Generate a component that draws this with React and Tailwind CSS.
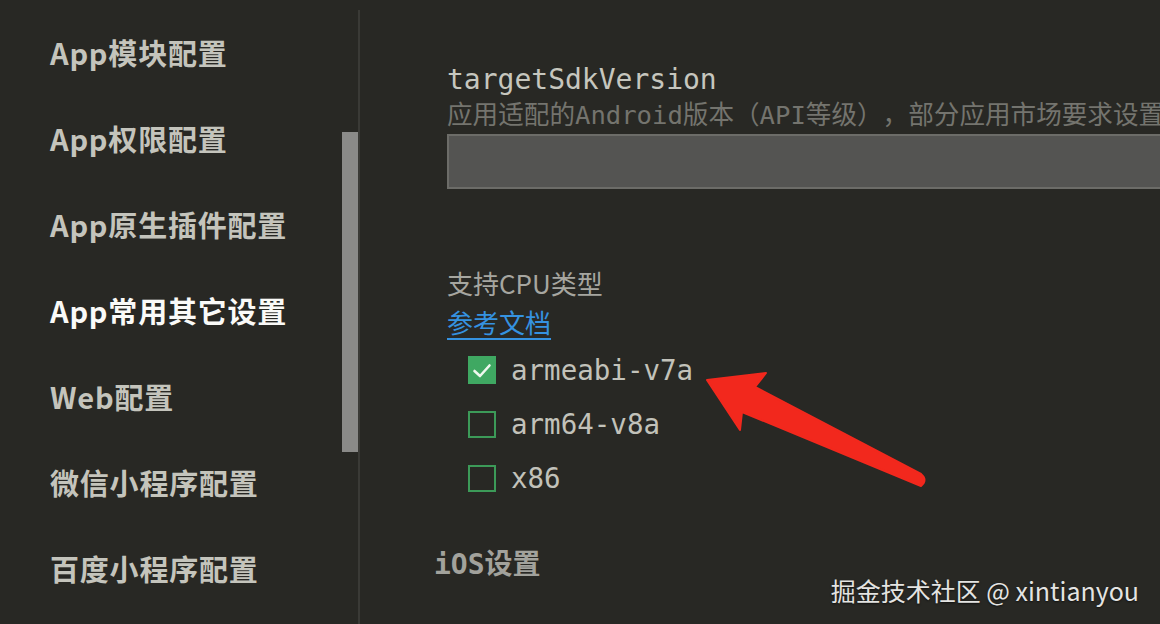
import React from "react";

const sideItems = [
  { label: "App模块配置" },
  { label: "App权限配置" },
  { label: "App原生插件配置" },
  { label: "App常用其它设置", active: true },
  { label: "Web配置" },
  { label: "微信小程序配置" },
  { label: "百度小程序配置" },
];

const cpus = [
  { label: "armeabi-v7a", checked: true },
  { label: "arm64-v8a", checked: false },
  { label: "x86", checked: false },
];

const mono = { fontFamily: '"DejaVu Sans Mono", "Noto Sans CJK SC", monospace' };
const sans = { fontFamily: '"Noto Sans CJK SC", "Noto Sans", sans-serif' };

function Checkbox({ checked }) {
  if (checked) {
    return (
      <div className="w-[28px] h-[28px] bg-[#3fa862] flex items-center justify-center">
        <svg width="28" height="28" viewBox="0 0 28 28">
          <path d="M6.5 15 L12 20 L21.5 9.5" fill="none" stroke="#eef8ee" strokeWidth="2.6" strokeLinecap="round" strokeLinejoin="round" />
        </svg>
      </div>
    );
  }
  return <div className="w-[28px] h-[27px] border-2 border-[#3c9a58]" />;
}

export default function App() {
  return (
    <div className="relative w-[1160px] h-[624px] bg-[#282824] flex overflow-hidden">
      {/* Sidebar */}
      <div className="relative w-[358px] h-full pt-[10px]" style={sans}>
        {sideItems.map((it) => (
          <div
            key={it.label}
            className={`h-[86px] flex items-center pl-[50px] text-[29px] font-bold tracking-[0.8px] ${
              it.active ? "text-[#fafaf8]" : "text-[#c4c4bc]"
            }`}
          >
            {it.label}
          </div>
        ))}
        <div className="absolute left-[342px] top-[132px] w-[16px] h-[320px] bg-[#8a8a88]" />
      </div>
      {/* Divider */}
      <div className="w-[2px] mt-[10px] h-[614px] bg-[#3a3a36]" />

      {/* Main */}
      <div className="flex-1 pl-[87px] pt-[63px] overflow-hidden">
        <div className="w-[800px]">
          <div className="text-[28px] leading-[34px] text-[#c6c6be]" style={mono}>
            targetSdkVersion
          </div>
          <div
            className="mt-[3px] text-[25.6px] leading-[30px] text-[#74746e] whitespace-nowrap [text-spacing-trim:space-all]"
            style={mono}
          >
            应用适配的Android版本（API等级），部分应用市场要求设置
          </div>
          <div className="mt-[4px] h-[55px] w-[760px] bg-[#545452] border-2 border-[#6c6c68]" />

          <div className="mt-[79px] text-[26px] leading-[30px] text-[#a6a6a0]" style={sans}>
            支持CPU类型
          </div>
          <div className="mt-[9px] leading-[30px]">
            <span className="text-[26px] text-[#3592e0] underline decoration-2 underline-offset-[5px]" style={sans}>
              参考文档
            </span>
          </div>

          <div className="mt-[14px] pl-[21px] flex flex-col gap-[26px]">
            {cpus.map((c) => (
              <div key={c.label} className="flex items-center h-[28px] gap-[15px]">
                <Checkbox checked={c.checked} />
                <span className="text-[27.5px] leading-[28px] text-[#c2c2ba]" style={mono}>
                  {c.label}
                </span>
              </div>
            ))}
          </div>

          <div className="mt-[56px] -ml-[13px] text-[28px] leading-[34px] font-bold text-[#a2a29c]" style={mono}>
            iOS设置
          </div>
        </div>
      </div>

      {/* Arrow annotation */}
      <svg className="absolute left-0 top-0" width="1160" height="624" viewBox="0 0 1160 624">
        <path
          d="M707 380 L766 373 L755 387 L921 474 Q928 480 921 486 L742 412 L740 430 Z"
          fill="#f2281d"
          stroke="#f2281d"
          strokeWidth="2"
          strokeLinejoin="round"
        />
      </svg>

      {/* Watermark */}
      <div
        className="absolute right-[21px] bottom-[20px] text-[25px] leading-[28px] text-[#e4e4e2]"
        style={{ fontFamily: '"Noto Sans CJK SC", "Noto Sans", sans-serif', textShadow: "0 1px 2px rgba(0,0,0,0.6)" }}
      >
        掘金技术社区 @ xintianyou
      </div>
    </div>
  );
}
